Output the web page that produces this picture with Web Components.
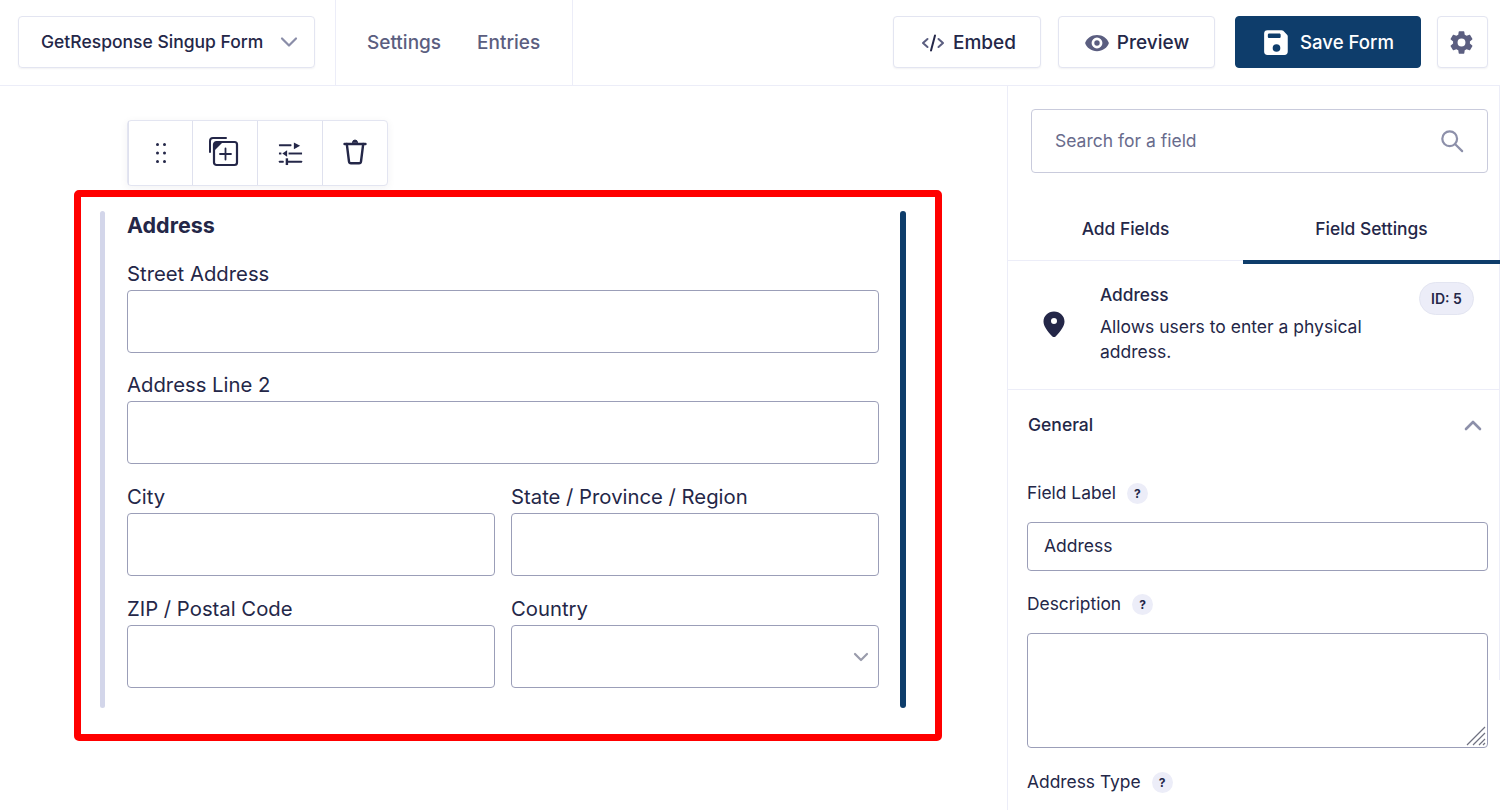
<!DOCTYPE html>
<html lang="en"><head><meta charset="utf-8"><title>Form editor</title>
<style>
html,body{margin:0;padding:0;height:810px;overflow:hidden;background:#fff;font-family:Inter,"Liberation Sans",sans-serif;color:#242748}
</style></head><body>
<gf-app>
  <gf-header slot="header"></gf-header>
  <gf-canvas slot="canvas"></gf-canvas>
  <gf-sidebar slot="sidebar"></gf-sidebar>
</gf-app>
<script>
function def(name,html,init){
  customElements.define(name,class extends HTMLElement{
    constructor(){super();const t=document.createElement('template');t.innerHTML=html;this.attachShadow({mode:'open'}).appendChild(t.content.cloneNode(true));}
    connectedCallback(){if(init)init.call(this);}
  });
}
def('gf-app',`<style>
:host{display:grid;grid-template-columns:1007px 493px;grid-template-rows:86px 724px;width:1500px;height:810px;overflow:hidden}
::slotted([slot=header]){grid-column:1/3}
</style><slot name="header"></slot><slot name="canvas"></slot><slot name="sidebar"></slot>`);

def('gf-btn',`<style>
:host{display:flex;align-items:center;justify-content:center;gap:var(--g,8px);box-sizing:border-box;height:52px;padding-top:1px;border:1px solid #e3e5f1;border-radius:4px;background:#fff;box-shadow:0 1px 2px rgba(36,39,72,.06);font:500 19px/24px Inter,sans-serif;color:#242748}
:host([primary]){background:#0e3d6b;border-color:#0e3d6b;color:#fff;box-shadow:none;font-size:18.600px;padding-top:0}
</style><slot></slot>`);

def('gf-header',`<style>
:host{display:flex;align-items:stretch;height:86px;box-sizing:border-box;border-bottom:1px solid #ecedf8;background:#fff}
.sel{display:flex;align-items:center;box-sizing:border-box;margin:16px 20px 0 18px;width:297px;height:52px;padding:0 16px 0 22px;justify-content:space-between;border:1px solid #e3e5f1;border-radius:4px;box-shadow:0 1px 2px rgba(36,39,72,.06);font:500 17.500px/24px Inter,sans-serif;white-space:nowrap}
nav{display:flex;align-items:center;gap:36px;box-sizing:border-box;width:238px;padding:0 0 0 31px;border:solid #ecedf8;border-width:0 1px;font:500 19px/24px Inter,sans-serif;color:#5b5e80;height:85px}
.act{margin-left:auto;display:flex;gap:17px;padding:16px 12px 0 0;align-items:flex-start}
gf-btn.e{width:148px;padding-left:3px}gf-btn.p{width:157px;--g:7px;margin-right:3px}gf-btn.s{width:186px;--g:11px;margin-right:-1px;padding-left:2px}gf-btn.g{width:51px;padding-right:2px}
svg{display:block}
</style>
<div class="sel"><span>GetResponse Singup Form</span>
<svg width="18" height="12" viewBox="0 0 18 12" fill="none" stroke="#8a8da8" stroke-width="2.2" stroke-linecap="round" stroke-linejoin="round"><path d="M2 2.5 9 9.5 16 2.5"/></svg></div>
<nav><span>Settings</span><span>Entries</span></nav>
<div class="act">
<gf-btn class="e"><svg width="24" height="20" viewBox="0 0 24 20" fill="none" stroke="#5b5e80" stroke-width="2" stroke-linecap="round" stroke-linejoin="round"><path d="M6.5 6 2 10l4.5 4M17.500 6 22 10l-4.500 4"/><path d="M14 2.500 10 17.500" stroke="#242748"/></svg><span>Embed</span></gf-btn>
<gf-btn class="p"><svg width="26" height="26" viewBox="0 0 24 24"><path fill="#5b5e80" fill-rule="evenodd" d="M12 4.500C6.800 4.500 2.400 7.600 1 12c1.400 4.400 5.800 7.500 11 7.500s9.600-3.100 11-7.500c-1.400-4.400-5.800-7.500-11-7.500zm0 12.500a5 5 0 1 1 0-10 5 5 0 0 1 0 10zm0-2.500a2.500 2.500 0 1 0 0-5 2.500 2.500 0 0 0 0 5z"/></svg><span>Preview</span></gf-btn>
<gf-btn class="s" primary><svg width="25" height="27" viewBox="0 0 22 24"><path fill="#fff" fill-rule="evenodd" d="M3 1h12.500c.6 0 1.100.2 1.500.6l3.400 3.400c.4.400.6.900.6 1.500V20a3 3 0 0 1-3 3H3a3 3 0 0 1-3-3V4a3 3 0 0 1 3-3zm1.500 3a1.200 1.200 0 0 0-1.200 1.200v1.600c0 .7.500 1.200 1.200 1.200h9c.7 0 1.200-.5 1.200-1.200V5.200c0-.7-.5-1.200-1.200-1.200zM11 13.500a3.400 3.400 0 1 0 0 6.800 3.400 3.400 0 0 0 0-6.800z"/></svg><span>Save Form</span></gf-btn>
<gf-btn class="g"><svg width="27" height="27" viewBox="0 0 24 24"><path fill="#5b5e80" d="M19.430 12.980c.04-.32.07-.64.07-.98s-.03-.66-.07-.98l2.110-1.650c.19-.15.24-.42.12-.64l-2-3.460c-.12-.22-.39-.3-.61-.22l-2.490 1c-.52-.4-1.080-.73-1.690-.98l-.38-2.650A.488.488 0 0 0 14 2h-4c-.25 0-.46.18-.49.42l-.38 2.650c-.61.25-1.170.59-1.690.98l-2.490-1c-.23-.09-.49 0-.61.22l-2 3.460c-.13.22-.07.49.12.64l2.110 1.650c-.04.32-.07.65-.07.98s.03.66.07.98l-2.110 1.650c-.19.15-.24.42-.12.64l2 3.460c.12.22.39.3.61.22l2.490-1c.52.4 1.080.73 1.690.98l.38 2.650c.03.24.24.42.49.42h4c.25 0 .46-.18.49-.42l.38-2.650c.61-.25 1.170-.59 1.690-.98l2.490 1c.23.09.49 0 .61-.22l2-3.460c.12-.22.07-.49-.12-.64l-2.110-1.650zM12 15.500a3.500 3.500 0 1 1 0-7 3.500 3.500 0 0 1 0 7z"/></svg></gf-btn>
</div>`);

def('gf-toolbar',`<style>
:host{display:flex;width:261px;height:66px;box-sizing:border-box;border:1px solid #e3e5f1;border-radius:4px;background:#fff;box-shadow:0 2px 8px rgba(36,39,72,.06)}
div{display:flex;align-items:center;justify-content:center;box-sizing:border-box;flex:0 0 65px;border-left:1px solid #dfe1ee}
div:first-child{border-left:0}
div:nth-child(2){flex-basis:64px}
svg{display:block}
</style>
<div><svg width="16" height="24" viewBox="0 0 16 24" fill="#242748"><circle cx="4.500" cy="3.500" r="1.500"/><circle cx="11.500" cy="3.500" r="1.500"/><circle cx="4.500" cy="12" r="1.500"/><circle cx="11.500" cy="12" r="1.500"/><circle cx="4.500" cy="20.500" r="1.500"/><circle cx="11.500" cy="20.500" r="1.500"/></svg></div>
<div><svg width="32" height="32" viewBox="1 2 32 32" fill="none" stroke="#242748" stroke-width="2" stroke-linecap="round"><path d="M2 17V6a3 3 0 0 1 3-3h13"/><rect x="6" y="7" width="23" height="23" rx="2.500" stroke-width="2.200"/><path d="M6.500 7.500h8l-8 8z" fill="#242748" stroke="none"/><path d="M17.500 13.500v11M12 19h11" stroke-width="1.800"/></svg></div>
<div><svg width="25" height="25" viewBox="0 0 26 26" fill="#242748"><rect x="1" y="3.500" width="13" height="2" rx=".5"/><path d="M16.500 1.500v7l6.500-3.500z"/><rect x="1" y="12" width="2.500" height="2"/><path d="M9.500 9.500v7L4.500 13z"/><rect x="11" y="12" width="14" height="2"/><rect x="1" y="20.500" width="5" height="2" rx=".5"/><path d="M8 18h2.500v7H8z"/><rect x="10" y="20.500" width="15" height="2" rx=".5"/></svg></div>
<div><svg width="24" height="28" viewBox="0 0 24 28" style="margin-top:-2px" fill="none" stroke="#242748" stroke-width="2.400" stroke-linejoin="round" stroke-linecap="round"><path d="M1.500 6h21"/><path d="M3.800 6 6 23.500a2 2 0 0 0 2 1.800h8a2 2 0 0 0 2-1.800L20.200 6"/><path d="M9.500 4.500a2.500 2.500 0 0 1 5 0z" fill="#242748" stroke-width="1"/></svg></div>`);

def('gf-field',`<style>
:host{display:flex;flex-direction:column;min-width:0}
label{display:block;font:400 20.300px/24px Inter,sans-serif;color:#242748;margin-bottom:4px;white-space:nowrap}
.box{position:relative;box-sizing:border-box;height:63px;border:1px solid #9b9eb8;border-radius:4px;background:#fff}
svg{position:absolute;right:9px;top:26px}
</style><label><slot></slot></label><div class="box"><slot name="in"></slot></div>`,function(){
  if(this.hasAttribute('select')&&!this.shadowRoot.querySelector('svg')){this.shadowRoot.querySelector('.box').insertAdjacentHTML('beforeend','<svg width="16" height="11" viewBox="0 0 16 11" fill="none" stroke="#9a9cac" stroke-width="2.200" stroke-linecap="round" stroke-linejoin="round"><path d="M2 2 8 8 14 2"/></svg>');}
});

def('gf-canvas',`<style>
:host{display:block;box-sizing:border-box;padding:34px 0 0 74px;background:#fff}
gf-toolbar{margin-left:53px}
.red{display:flex;box-sizing:border-box;width:868px;height:551px;margin-top:4px;border:7px solid #f00;border-radius:5px;padding:14px 0 26px 19px}
.bar{width:5px;border-radius:3px;background:#d3d6ea;flex:none}
.bar.r{width:6px;background:#0e3d6b;margin-left:21px}
.c{width:752px;margin-left:22px;flex:none}
h2{margin:0 0 23px;font:700 21.500px/28px Inter,sans-serif;color:#242748}
.g{display:grid;grid-template-columns:368px 368px;column-gap:16px;row-gap:21px}
.w{grid-column:1/3}
.t2{margin-top:-1px}
</style>
<gf-toolbar></gf-toolbar>
<div class="red"><div class="bar"></div><div class="c"><h2>Address</h2>
<div class="g">
<gf-field class="w">Street Address</gf-field>
<gf-field class="w t2">Address Line 2</gf-field>
<gf-field>City</gf-field>
<gf-field>State / Province / Region</gf-field>
<gf-field>ZIP / Postal Code</gf-field>
<gf-field select>Country</gf-field>
</div></div><div class="bar r"></div></div>`);

def('gf-help',`<style>
:host{display:inline-flex;align-items:center;justify-content:center;width:21px;height:21px;border-radius:50%;background:#ecedf8;font:700 12px/21px Inter,sans-serif;color:#242748;flex:none}
</style>?`);

def('gf-setting',`<style>
:host{display:block}
.l{display:flex;align-items:center;gap:var(--lg,11px);font:400 17.400px/24px Inter,sans-serif;color:#242748;margin-bottom:var(--lm,17px)}
</style><div class="l"><slot></slot><gf-help></gf-help></div><slot name="ctl"></slot>`);

def('gf-sidebar',`<style>
:host{display:block;position:relative;box-sizing:border-box;height:724px;overflow:hidden;border-left:1px solid #ecedf8;background:#fff;color:#242748}
.search{display:flex;align-items:center;justify-content:space-between;box-sizing:border-box;margin:23px 12px 0 23px;height:64px;padding:0 23px 0 23px;border:1px solid #c9cbdc;border-radius:4px;font:400 17.500px/24px Inter,sans-serif;color:#686b8c}
.tabs{display:flex;height:88px;box-sizing:border-box;border-bottom:1px solid #ecedf8;font:500 17.400px/24px Inter,sans-serif}
.tabs div{flex:1 1 0;display:flex;justify-content:center;align-items:flex-end;padding-bottom:19px;box-sizing:border-box}
.tabs div.on{height:91px;border-bottom:4px solid #0e3d6b;padding-bottom:19px;position:relative;z-index:1}
.tabs div:first-child{flex:0 0 235px}
.info{display:flex;box-sizing:border-box;height:129px;border-bottom:1px solid #ecedf8;position:relative}
.pin{flex:none;width:92px;display:flex;justify-content:center;padding-top:49px;box-sizing:border-box}
.txt{padding-top:21px;width:280px}
.t{font:500 17.300px/25px Inter,sans-serif;margin-bottom:7px}
.d{font:400 17.500px/25px Inter,sans-serif}
.id{position:absolute;left:411px;top:21px;width:55px;height:33px;border-radius:17px;box-sizing:border-box;border:1px solid #e3e5f1;background:#ecedf8;display:flex;align-items:center;justify-content:center;font:600 14px/20px Inter,sans-serif}
.gen{display:flex;justify-content:space-between;align-items:center;padding:23px 18px 0 20px;height:24px;font:500 17.500px/24px Inter,sans-serif}
.body{padding:44px 12px 0 19px}
.inp{box-sizing:border-box;height:49px;border:1px solid #9b9eb8;border-radius:4px;padding:0 16px 2px;display:flex;align-items:center;font:400 17.500px/24px Inter,sans-serif}
.ta{position:relative;box-sizing:border-box;height:115px;border:1px solid #9b9eb8;border-radius:4px}
.ta svg{position:absolute;right:1px;bottom:1px}
gf-setting.a{margin-top:21px;--lm:17px}
gf-setting.b{margin-top:22px}
.sb{position:absolute;right:0;top:0;width:1px;height:594px;background:#ecedf8}
</style>
<div class="search"><span>Search for a field</span><svg width="24" height="24" viewBox="0 0 26 26" fill="none" stroke="#8d90aa" stroke-width="2.400" stroke-linecap="round"><circle cx="10.500" cy="10.500" r="8"/><path d="M16.500 16.500 24 24"/></svg></div>
<div class="tabs"><div>Add Fields</div><div class="on">Field Settings</div></div>
<div class="info"><div class="pin"><svg width="24" height="28" viewBox="0 0 24 28"><path fill="#242748" fill-rule="evenodd" d="M12 1.500C6 1.500 1.500 6 1.500 11.500c0 4.500 3.600 9.500 8.900 14.900.9.900 2.300.9 3.200 0 5.300-5.400 8.900-10.400 8.900-14.900C22.500 6 18 1.500 12 1.500zm0 12.500a3 3 0 1 1 0-6 3 3 0 0 1 0 6z"/></svg></div>
<div class="txt"><div class="t">Address</div><div class="d">Allows users to enter a physical address.</div></div><div class="id">ID: 5</div></div>
<div class="gen"><span>General</span><svg width="18" height="12" viewBox="0 0 18 12" fill="none" stroke="#8d90aa" stroke-width="2.600" stroke-linecap="round" stroke-linejoin="round"><path d="M2 10 9 3l7 7"/></svg></div>
<div class="body">
<gf-setting>Field Label<div slot="ctl" class="inp">Address</div></gf-setting>
<gf-setting class="a">Description<div slot="ctl" class="ta"><svg width="20" height="20" viewBox="0 0 20 20" stroke="#6f7180" stroke-width="1.200" fill="none"><path d="M1 19 19 1M7 19 19 7M13 19l6-6M17 19l2-2"/></svg></div></gf-setting>
<gf-setting class="b">Address Type</gf-setting>
</div><div class="sb"></div>`);
</script>
</body></html>
